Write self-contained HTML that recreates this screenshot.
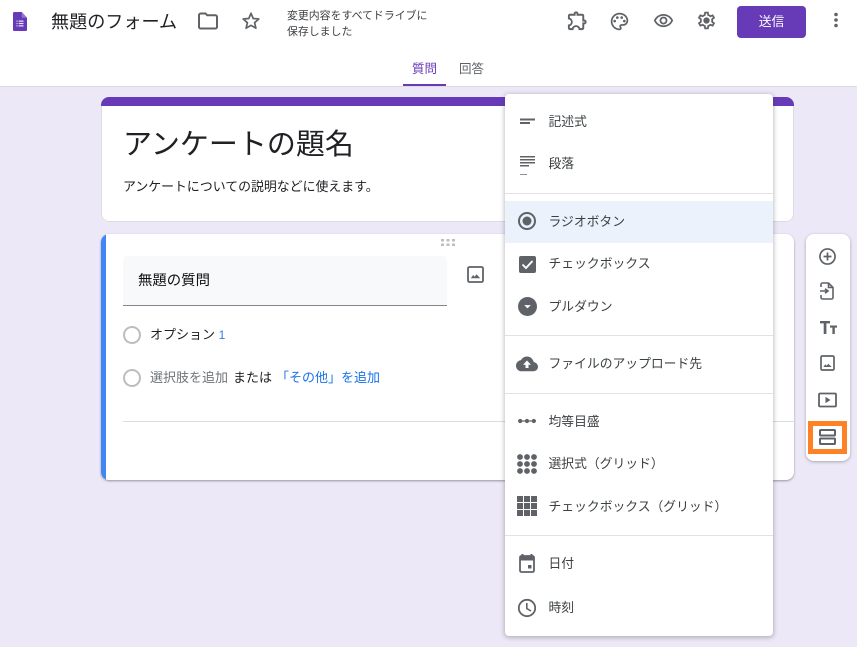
<!DOCTYPE html>
<html lang="ja"><head><meta charset="utf-8"><style>
*{box-sizing:border-box;margin:0;padding:0}
html,body{width:857px;height:647px;overflow:hidden}
body{position:relative;background:#ede8f7;font-family:"Liberation Sans","Noto Sans CJK JP",sans-serif;color:#202124}
.a{position:absolute;white-space:nowrap}
svg{position:absolute;display:block}
.t{position:absolute;left:43.500px;font-size:12.800px;line-height:18px;color:#3c4043;white-space:nowrap}
.hr{position:absolute;left:0;width:268px;height:1px;background:#e2e2e4}
</style></head><body>
<div class="a" style="left:0;top:0;width:857px;height:87px;background:#fff;border-bottom:1px solid #dadce0"></div>
<svg style="left:13px;top:12px" width="14" height="19" viewBox="0 0 16 20" preserveAspectRatio="none"><path d="M1.500 0H10l6 6v12.500a1.500 1.500 0 0 1-1.500 1.500h-13A1.500 1.500 0 0 1 0 18.500V1.500A1.500 1.500 0 0 1 1.500 0z" fill="#673ab7"/><path d="M10 0l6 6h-6z" fill="#9575cd"/><path d="M4 9h1.200v1.200H4zM6.500 9H12v1.200H6.500zM4 11.500h1.200v1.200H4zM6.500 11.500H12v1.200H6.500zM4 14h1.200v1.200H4zM6.500 14H12v1.200H6.500z" fill="#e8e0f5"/></svg>
<div class="a" style="left:51px;top:9px;font-size:18.100px;line-height:26px;color:#202124">無題のフォーム</div>
<svg style="left:198px;top:12px" width="20" height="18" viewBox="0 0 20 18"><path d="M1 3.200C1 2.300 1.700 1.500 2.600 1.500H7.500L9.300 3.300H17.400C18.300 3.300 19 4 19 4.900V14.900C19 15.800 18.300 16.500 17.400 16.500H2.600C1.700 16.500 1 15.800 1 14.900Z" fill="none" stroke="#5f6368" stroke-width="2"/></svg>
<svg style="left:241px;top:11px" width="20" height="19" viewBox="0 0 20 19"><path d="M10 2.300l2.200 5.200 5.600.5-4.200 3.700 1.300 5.500L10 14.300l-4.900 2.900 1.300-5.500L2.200 8l5.600-.5z" fill="none" stroke="#5f6368" stroke-width="1.700" stroke-linejoin="round"/></svg>
<div class="a" style="left:287px;top:7.500px;font-size:10.900px;line-height:16px;color:#3c4043">変更内容をすべてドライブに<br>保存しました</div>
<svg style="left:566px;top:9px" width="23" height="23" viewBox="0 0 24 24" fill="#5f6368"><path d="M10.500 4.500c.280 0 .500.220.500.500v2h6v6h2c.280 0 .500.220.500.500s-.220.500-.500.500h-2v6h-2.120c-.680-1.750-2.390-3-4.380-3s-3.700 1.250-4.380 3H4v-2.120c1.750-.680 3-2.390 3-4.380 0-1.990-1.240-3.700-2.990-4.380L4 7h6V5c0-.280.220-.500.500-.500m0-2C9.120 2.500 8 3.620 8 5H4c-1.100 0-1.990.900-1.990 2v3.800h.490c1.490 0 2.700 1.210 2.700 2.700s-1.210 2.700-2.700 2.700H2V20c0 1.100.900 2 2 2h3.800v-.500c0-1.490 1.210-2.700 2.700-2.700 1.490 0 2.700 1.210 2.700 2.700v.500H17c1.100 0 2-.900 2-2v-4c1.380 0 2.500-1.120 2.500-2.500S20.380 11 19 11V7c0-1.100-.900-2-2-2h-4c0-1.380-1.120-2.500-2.500-2.500z"/></svg>
<svg style="left:609px;top:11px" width="21" height="21" viewBox="0 0 24 24" fill="#5f6368"><path d="M12 22C6.490 22 2 17.510 2 12S6.490 2 12 2s10 4.040 10 9c0 3.310-2.690 6-6 6h-1.770c-.28 0-.5.220-.5.500 0 .120.050.230.130.330.410.470.640 1.060.640 1.670A2.500 2.500 0 0 1 12 22zm0-18c-4.410 0-8 3.590-8 8s3.590 8 8 8c.280 0 .500-.220.500-.500a.540.540 0 0 0-.140-.350c-.410-.460-.630-1.050-.630-1.650a2.500 2.500 0 0 1 2.500-2.500H16c2.210 0 4-1.790 4-4 0-3.860-3.590-7-8-7z"/><circle cx="6.500" cy="11.500" r="1.500"/><circle cx="9.500" cy="7.500" r="1.500"/><circle cx="14.500" cy="7.500" r="1.500"/><circle cx="17.500" cy="11.500" r="1.500"/></svg>
<svg style="left:653px;top:10px" width="21" height="21" viewBox="0 0 24 24" fill="#5f6368"><path d="M12 6.500c3.790 0 7.170 2.130 8.820 5.500-1.650 3.370-5.020 5.500-8.820 5.500S4.830 15.370 3.180 12C4.830 8.630 8.210 6.500 12 6.500m0-2C7 4.500 2.730 7.610 1 12c1.730 4.390 6 7.500 11 7.500s9.270-3.110 11-7.500c-1.730-4.390-6-7.500-11-7.500zm0 5a2.500 2.500 0 0 1 0 5 2.500 2.500 0 0 1 0-5m0-2c-2.480 0-4.500 2.020-4.500 4.500s2.020 4.500 4.500 4.500 4.500-2.020 4.500-4.500-2.020-4.500-4.500-4.500z"/></svg>
<svg style="left:696px;top:10px" width="21" height="21" viewBox="0 0 24 24" fill="#5f6368"><path d="M19.430 12.980c.040-.320.070-.640.070-.980 0-.340-.030-.660-.070-.980l2.110-1.650c.190-.150.240-.420.120-.640l-2-3.460c-.090-.160-.260-.250-.440-.250-.060 0-.120.010-.170.030l-2.490 1c-.520-.400-1.080-.730-1.690-.980l-.380-2.650C14.460 2.180 14.250 2 14 2h-4c-.250 0-.460.180-.490.420l-.380 2.650c-.610.250-1.170.590-1.690.980l-2.490-1c-.060-.020-.120-.030-.180-.030-.170 0-.340.090-.430.250l-2 3.460c-.130.220-.070.490.120.640l2.110 1.650c-.040.320-.070.650-.070.980 0 .330.030.660.070.980l-2.110 1.650c-.190.150-.240.420-.120.640l2 3.460c.090.160.260.250.440.250.060 0 .120-.010.170-.030l2.490-1c.520.400 1.080.730 1.690.980l.380 2.650c.030.240.240.420.490.420h4c.250 0 .460-.180.490-.420l.380-2.650c.610-.250 1.170-.590 1.690-.980l2.490 1c.060.020.120.030.180.030.170 0 .340-.090.430-.250l2-3.460c.120-.220.070-.490-.120-.640l-2.110-1.650zm-1.980-1.710c.040.310.050.520.050.730 0 .210-.020.430-.05.730l-.140 1.130.890.700 1.080.84-.700 1.210-1.270-.510-1.040-.420-.900.680c-.430.320-.840.560-1.250.730l-1.060.43-.160 1.130-.200 1.350h-1.400l-.190-1.350-.160-1.130-1.060-.43c-.43-.180-.830-.41-1.230-.71l-.910-.700-1.060.43-1.270.510-.700-1.210 1.080-.84.890-.700-.140-1.130c-.030-.310-.050-.540-.050-.74s.020-.43.050-.73l.140-1.130-.89-.700-1.080-.84.700-1.210 1.270.510 1.040.42.900-.68c.430-.320.840-.560 1.250-.73l1.060-.43.160-1.130.200-1.350h1.390l.190 1.350.160 1.130 1.060.43c.43.180.830.410 1.230.71l.910.700 1.060-.43 1.270-.510.700 1.210-1.070.85-.89.700.140 1.130z"/><circle cx="12" cy="12" r="3.600"/></svg>
<div class="a" style="left:737px;top:6px;width:69px;height:32px;background:#673ab7;border-radius:4px;color:#fff;font-size:12.800px;line-height:32px;text-align:center">送信</div>
<svg style="left:833px;top:12px" width="6" height="16" viewBox="0 0 6 16"><circle cx="3" cy="2.500" r="1.800" fill="#5f6368"/><circle cx="3" cy="8" r="1.800" fill="#5f6368"/><circle cx="3" cy="13.500" r="1.800" fill="#5f6368"/></svg>
<div class="a" style="left:412px;top:60px;font-size:12.500px;line-height:18px;color:#673ab7">質問</div>
<div class="a" style="left:459px;top:60px;font-size:12.500px;line-height:18px;color:#5f6368">回答</div>
<div class="a" style="left:403px;top:84px;width:43px;height:2px;background:#673ab7"></div>

<div class="a" style="left:101px;top:97px;width:693px;height:125px;background:#fff;border-radius:8px;overflow:hidden"><div style="position:absolute;inset:0;border:1px solid #dadce0;border-radius:8px"></div><div style="position:absolute;left:0;top:0;width:100%;height:9px;background:#673ab7"></div></div>
<div class="a" style="left:123px;top:124px;font-size:29px;line-height:42px;color:#202124">アンケートの題名</div>
<div class="a" style="left:123px;top:177.500px;font-size:12.900px;line-height:18px;color:#202124">アンケートについての説明などに使えます。</div>

<div class="a" style="left:101px;top:234px;width:693px;height:246px;background:#fff;border-radius:8px;box-shadow:0 1px 2px rgba(60,64,67,.5);overflow:hidden;"><div style="position:absolute;left:0;top:0;width:5px;height:100%;background:#4285f4"></div></div>
<svg style="left:441px;top:238px" width="14" height="9" viewBox="0 0 14 9" fill="#bdbdbd"><rect x="0" y="1" width="3" height="2.500"/><rect x="5.500" y="1" width="3" height="2.500"/><rect x="11" y="1" width="3" height="2.500"/><rect x="0" y="5.500" width="3" height="2.500"/><rect x="5.500" y="5.500" width="3" height="2.500"/><rect x="11" y="5.500" width="3" height="2.500"/></svg>
<div class="a" style="left:123px;top:256px;width:324px;height:50px;background:#f8f9fa;border-radius:4px 4px 0 0;border-bottom:1px solid #80868b"></div>
<div class="a" style="left:138px;top:272px;font-size:14.400px;line-height:18px;color:#111">無題の質問</div>
<svg style="left:467px;top:266px" width="17" height="17" viewBox="0 0 17 17"><rect x="1" y="1" width="15" height="15" rx="1.500" fill="none" stroke="#5f6368" stroke-width="1.800"/><path d="M3.800 12.200L6.200 9 7.700 10.700 9.500 8.300 13.200 12.200Z" fill="#5f6368"/></svg>
<div class="a" style="left:123px;top:326px;width:18px;height:18px;border:2px solid #bdbdbd;border-radius:50%"></div>
<div class="a" style="left:150px;top:326px;font-size:13px;line-height:18px;color:#202124">オプション <span style="color:#3b78e7;font-size:12px">1</span></div>
<div class="a" style="left:123px;top:369px;width:18px;height:18px;border:2px solid #bdbdbd;border-radius:50%"></div>
<div class="a" style="left:150px;top:369px;font-size:13px;line-height:18px;color:#70757a">選択肢を追加</div>
<div class="a" style="left:233px;top:369px;font-size:13px;line-height:18px;color:#202124">または</div>
<div class="a" style="left:276px;top:369px;font-size:13px;line-height:18px;color:#1a73e8">「その他」を追加</div>
<div class="a" style="left:123px;top:421px;width:671px;height:1px;background:#dadce0"></div>

<div class="a" style="left:806px;top:234px;width:44px;height:227px;background:#fff;border-radius:8px;box-shadow:0 1px 3px rgba(60,64,67,.4)"></div>
<svg style="left:819px;top:248px" width="17" height="17" viewBox="0 0 18 18"><circle cx="9" cy="9" r="8" fill="none" stroke="#5f6368" stroke-width="1.800"/><path d="M9 4.800V13.200M4.800 9H13.200" stroke="#5f6368" stroke-width="1.800"/></svg>
<svg style="left:820px;top:282px" width="14" height="18" viewBox="0 0 14 18"><path d="M1 5V2.500C1 1.700 1.700 1 2.500 1H8.500L13 5.500V15.500C13 16.300 12.300 17 11.500 17H2.500C1.700 17 1 16.300 1 15.500V13M8.500 1V5.500H13" fill="none" stroke="#5f6368" stroke-width="1.600"/><path d="M0 9H7M5 6.800L8 9 5 11.200" fill="none" stroke="#5f6368" stroke-width="1.600"/></svg>
<svg style="left:820px;top:320px" width="17" height="15" viewBox="0 0 17 15"><path d="M0 1H10V3.400H6.400V14H3.700V3.400H0ZM10 5.500H17V7.600H14.800V14H12.400V7.600H10Z" fill="#5f6368"/></svg>
<svg style="left:820px;top:355px" width="15" height="16" viewBox="0 0 15 16"><rect x="1" y="1" width="13" height="14" rx="1.300" fill="none" stroke="#5f6368" stroke-width="1.700"/><path d="M3.300 12L5.400 9.300 6.700 10.800 8.300 8.700 11.700 12Z" fill="#5f6368"/></svg>
<svg style="left:818px;top:392px" width="19" height="16" viewBox="0 0 19 16"><rect x="1" y="1.500" width="17" height="13" rx="1" fill="none" stroke="#5f6368" stroke-width="1.800"/><path d="M7.500 4.800V11.200L12.500 8Z" fill="#5f6368"/></svg>
<div class="a" style="left:808px;top:421px;width:39px;height:33px;border:5px solid #ff8125;background:#fff"></div>
<svg style="left:819px;top:429px" width="17" height="16" viewBox="0 0 17 16"><rect x="1" y="1" width="15" height="5.500" rx=".8" fill="none" stroke="#5f6368" stroke-width="2"/><rect x="1" y="9.500" width="15" height="5.500" rx=".8" fill="none" stroke="#5f6368" stroke-width="2"/></svg>

<div class="a" style="left:505px;top:94px;width:268px;height:542px;background:#fff;border-radius:4px;box-shadow:0 1px 4px 1px rgba(60,64,67,.3)">
  <svg style="left:15px;top:22px" width="15" height="10" viewBox="0 0 15 10" fill="#5f6368"><rect y="2.500" width="15" height="2"/><rect y="6" width="10" height="2"/></svg>
  <div class="t" style="top:19px">記述式</div>
  <svg style="left:15px;top:61px" width="15" height="20" viewBox="0 0 15 20" fill="#5f6368"><rect y="1" width="15" height="1.500"/><rect y="4" width="15" height="1.500"/><rect y="7" width="15" height="1.500"/><rect y="10" width="9" height="1.500"/><rect y="19" width="7" height="1" opacity=".7"/></svg>
  <div class="t" style="top:61px">段落</div>
  <div class="hr" style="top:99px"></div>

  <div class="a" style="left:0;top:107px;width:268px;height:42px;background:#ecf2fc"></div>
  <svg style="left:12px;top:117px" width="20" height="20" viewBox="0 0 20 20"><circle cx="10" cy="10" r="8" fill="none" stroke="#5f6368" stroke-width="2"/><circle cx="10" cy="10" r="4.500" fill="#5f6368"/></svg>
  <div class="t" style="top:119px">ラジオボタン</div>
  <svg style="left:14px;top:162px" width="17" height="17" viewBox="0 0 17 17"><rect width="17" height="17" rx="2" fill="#5f6368"/><path d="M3.500 8.500L7 12 13.500 5" fill="none" stroke="#fff" stroke-width="1.900"/></svg>
  <div class="t" style="top:161px">チェックボックス</div>
  <svg style="left:13px;top:203px" width="19" height="19" viewBox="0 0 20 20"><circle cx="10" cy="10" r="10" fill="#5f6368"/><path d="M6.500 8.500H13.500L10 12Z" fill="#fff"/></svg>
  <div class="t" style="top:204px">プルダウン</div>
  <div class="hr" style="top:241px"></div>

  <svg style="left:11px;top:262px" width="22" height="16" viewBox="0 0 22 16"><path d="M17.700 6.100C17 2.700 14.200.5 11 .5 8.400.5 6.100 2 5 4.100 2.200 4.400 0 6.800 0 9.700 0 12.800 2.500 15.300 5.500 15.300H17.500C20 15.300 22 13.300 22 10.800 22 8.400 20.100 6.300 17.700 6.100Z" fill="#5f6368"/><path d="M11 4.500L15 8.700H12.500V12H9.500V8.700H7Z" fill="#fff"/></svg>
  <div class="t" style="top:261px">ファイルのアップロード先</div>
  <div class="hr" style="top:299px"></div>

  <svg style="left:13px;top:324px" width="18" height="6" viewBox="0 0 18 6" fill="#5f6368"><circle cx="2.200" cy="3" r="2.100"/><circle cx="9" cy="3" r="2.100"/><circle cx="15.800" cy="3" r="2.100"/><rect y="2.400" width="18" height="1.200"/></svg>
  <div class="t" style="top:319px">均等目盛</div>
  <svg style="left:12px;top:360px" width="20" height="20" viewBox="0 0 20 20" fill="#5f6368"><circle cx="3" cy="3" r="2.900"/><circle cx="10" cy="3" r="2.900"/><circle cx="17" cy="3" r="2.900"/><circle cx="3" cy="10" r="2.900"/><circle cx="10" cy="10" r="2.900"/><circle cx="17" cy="10" r="2.900"/><circle cx="3" cy="17" r="2.900"/><circle cx="10" cy="17" r="2.900"/><circle cx="17" cy="17" r="2.900"/></svg>
  <div class="t" style="top:361px">選択式（グリッド）</div>
  <svg style="left:12px;top:402px" width="21" height="21" viewBox="0 0 21 21" fill="#5f6368"><rect width="6" height="6"/><rect x="7" width="6" height="6"/><rect x="14" width="6" height="6"/><rect y="7" width="6" height="6"/><rect x="7" y="7" width="6" height="6"/><rect x="14" y="7" width="6" height="6"/><rect y="14" width="6" height="6"/><rect x="7" y="14" width="6" height="6"/><rect x="14" y="14" width="6" height="6"/></svg>
  <div class="t" style="top:404px">チェックボックス（グリッド）</div>
  <div class="hr" style="top:441px"></div>

  <svg style="left:14px;top:460px" width="16" height="19" viewBox="0 0 16 19"><path d="M3.500 0V2M12.500 0V2" stroke="#5f6368" stroke-width="2"/><rect x="1" y="2" width="14" height="16" rx="1.500" fill="none" stroke="#5f6368" stroke-width="1.800"/><rect x="1" y="2" width="14" height="4.500" fill="#5f6368"/><rect x="9" y="11" width="3.500" height="3.500" fill="#5f6368"/></svg>
  <div class="t" style="top:461px">日付</div>
  <svg style="left:12px;top:504px" width="20" height="20" viewBox="0 0 20 20"><circle cx="10" cy="10" r="8.200" fill="none" stroke="#5f6368" stroke-width="1.800"/><path d="M9.800 5V10.500L14 13" fill="none" stroke="#5f6368" stroke-width="1.600"/></svg>
  <div class="t" style="top:505px">時刻</div>
</div>
</body></html>
